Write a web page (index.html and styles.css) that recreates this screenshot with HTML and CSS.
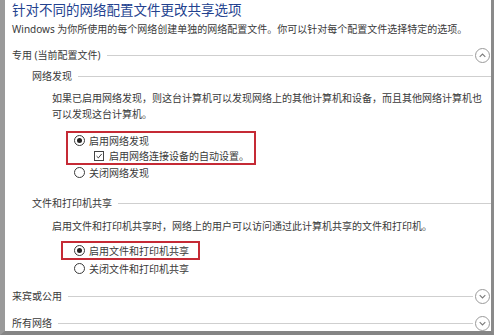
FILE: index.html
```html
<!DOCTYPE html>
<html lang="zh-CN">
<head>
    <meta charset="UTF-8">
    <meta name="viewport" content="width=device-width, initial-scale=1.0">
    <title>高级共享设置</title>
    <link rel="stylesheet" href="styles.css">
</head>
<body>
    <div class="window">
        <h1 class="title">针对不同的网络配置文件更改共享选项</h1>
        <p class="intro">Windows 为你所使用的每个网络创建单独的网络配置文件。你可以针对每个配置文件选择特定的选项。</p>

        <div class="group-head first">
            <span>专用 (当前配置文件)</span>
            <span class="rule"></span>
            <span class="chevron">
                <svg width="15" height="15" viewBox="0 0 15 15"><circle cx="7.5" cy="7.5" r="7" fill="none" stroke="#9a9a9a"/><path d="M4.7 8.9 L7.5 6.1 L10.3 8.9" fill="none" stroke="#7a7a7a" stroke-width="1.1"/></svg>
            </span>
        </div>

        <div class="sub-head discovery">
            <span>网络发现</span>
            <span class="rule"></span>
        </div>
        <p class="desc">如果已启用网络发现，则这台计算机可以发现网络上的其他计算机和设备，而且其他网络计算机也<br>可以发现这台计算机。</p>
        <div class="options">
            <div class="highlight box1">
                <div class="option"><span class="radio checked"></span>启用网络发现</div>
                <div class="option nested">
                    <span class="checkbox">
                        <svg width="10" height="10" viewBox="0 0 10 10"><path d="M2 5.2 L4.2 7.4 L8.4 2.4" fill="none" stroke="#333" stroke-width="1.2"/></svg>
                    </span>启用网络连接设备的自动设置。
                </div>
            </div>
            <div class="option"><span class="radio"></span>关闭网络发现</div>
        </div>

        <div class="sub-head sharing">
            <span>文件和打印机共享</span>
            <span class="rule"></span>
        </div>
        <p class="desc single">启用文件和打印机共享时，网络上的用户可以访问通过此计算机共享的文件和打印机。</p>
        <div class="options">
            <div class="highlight box2">
                <div class="option"><span class="radio checked"></span>启用文件和打印机共享</div>
            </div>
            <div class="option after-box2"><span class="radio"></span>关闭文件和打印机共享</div>
        </div>

        <div class="group-head guest">
            <span>来宾或公用</span>
            <span class="rule"></span>
            <span class="chevron">
                <svg width="15" height="15" viewBox="0 0 15 15"><circle cx="7.5" cy="7.5" r="7" fill="none" stroke="#9a9a9a"/><path d="M4.7 6.1 L7.5 8.9 L10.3 6.1" fill="none" stroke="#7a7a7a" stroke-width="1.1"/></svg>
            </span>
        </div>
        <div class="group-head all">
            <span>所有网络</span>
            <span class="rule"></span>
            <span class="chevron">
                <svg width="15" height="15" viewBox="0 0 15 15"><circle cx="7.5" cy="7.5" r="7" fill="none" stroke="#9a9a9a"/><path d="M4.7 6.1 L7.5 8.9 L10.3 6.1" fill="none" stroke="#7a7a7a" stroke-width="1.1"/></svg>
            </span>
        </div>
    </div>
</body>
</html>
```

FILE: styles.css
```css
* {
    margin: 0;
    padding: 0;
    box-sizing: border-box;
}

body {
    font-family: "Noto Sans", "Noto Sans CJK SC", sans-serif;
    font-size: 10px;
    color: #3a3a3a;
    background-color: #8e8e8e;
}

.window {
    width: 494px;
    height: 335px;
    background-color: #ffffff;
    border-left: 5px solid #9a9a9a;
    border-right: 3px solid #8a8a8a;
    border-bottom: 4px solid #858585;
    padding: 1px 0 0 7px;
    overflow: hidden;
}

.title {
    font-size: 13.5px;
    font-weight: normal;
    line-height: 18px;
    color: #23428f;
}

.intro {
    margin-top: 3px;
    line-height: 14px;
}

.group-head, .sub-head {
    display: flex;
    align-items: center;
    height: 16px;
    line-height: 16px;
}

.group-head {
    padding-right: 1px;
}

.group-head.first {
    margin-top: 11px;
}

.group-head.guest {
    margin-top: 12px;
}

.group-head.all {
    margin-top: 11px;
}

.rule {
    flex: 1;
    height: 1px;
    background-color: #cfcfcf;
    margin-left: 6px;
}

.group-head .rule {
    margin-right: 2px;
}

.chevron {
    display: flex;
    width: 15px;
    height: 15px;
}

.sub-head {
    padding-left: 20px;
}

.sub-head.discovery {
    margin-top: 5px;
}

.sub-head.sharing {
    margin-top: 15px;
}

.desc {
    padding-left: 40px;
    line-height: 16px;
    margin-top: 6px;
}

.desc.single {
    margin-top: 7px;
}

.options {
    padding-left: 60px;
    margin-top: 9px;
}

.sub-head.sharing + .desc + .options {
    margin-top: 7px;
}

.option {
    display: flex;
    align-items: center;
    height: 15px;
    white-space: nowrap;
}

.option.nested {
    padding-left: 22px;
}

.highlight {
    display: inline-block;
    border: 2px solid #c52a35;
}

.box1 {
    margin-left: -6px;
    padding: 0 5px 0 4px;
}

.box2 {
    margin-left: -11px;
    padding: 0 9px 0 9px;
}

.after-box2 {
    margin-top: 1px;
}

.radio {
    width: 11px;
    height: 11px;
    border: 1px solid #3a3a3a;
    border-radius: 50%;
    margin: 0 4px 0 2px;
    display: flex;
    align-items: center;
    justify-content: center;
    background-color: #fff;
}

.radio.checked::after {
    content: "";
    width: 5px;
    height: 5px;
    border-radius: 50%;
    background-color: #222;
}

.checkbox {
    width: 10px;
    height: 10px;
    border: 1px solid #444;
    margin-right: 5px;
    display: flex;
    align-items: center;
    justify-content: center;
}
```
